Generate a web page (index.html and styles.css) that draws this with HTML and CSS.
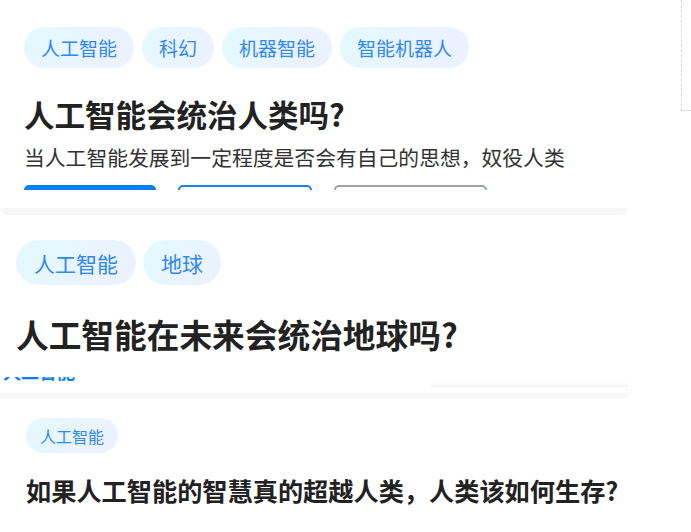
FILE: index.html
```html
<!DOCTYPE html>
<html lang="zh-CN">
  <head>
    <meta charset="UTF-8" />
    <meta name="viewport" content="width=device-width, initial-scale=1.0" />
    <title>话题卡片</title>
    <link rel="stylesheet" href="styles.css">
  </head>
  <body>
    <div class="page">
      <div class="feed">
        <div class="card card-first">
          <div class="card-clip">
            <div class="tags">
              <span class="tag">人工智能</span>
              <span class="tag">科幻</span>
              <span class="tag">机器智能</span>
              <span class="tag">智能机器人</span>
            </div>
            <h2 class="title">人工智能会统治人类吗?</h2>
            <p class="desc">当人工智能发展到一定程度是否会有自己的思想，奴役人类</p>
            <div class="actions">
              <button class="btn btn-primary" aria-label="参与讨论"></button>
              <button class="btn btn-outline" aria-label="查看详情"></button>
              <button class="btn btn-gray" aria-label="收藏话题"></button>
            </div>
          </div>
        </div>

        <div class="card card-second">
          <div class="tags">
            <span class="tag">人工智能</span>
            <span class="tag">地球</span>
          </div>
          <h2 class="title">人工智能在未来会统治地球吗?</h2>
          <div class="peek">
            <span class="peek-text">人工智能</span>
          </div>
          <div class="card-foot">
            <div class="foot-shade"></div>
          </div>
        </div>

        <div class="card card-third">
          <div class="tags">
            <span class="tag">人工智能</span>
          </div>
          <h2 class="title">如果人工智能的智慧真的超越人类，人类该如何生存?</h2>
        </div>
      </div>
      <div class="side-box"></div>
    </div>
  </body>
</html>
```

FILE: styles.css
```css
body {
  margin: 0;
  padding: 0;
  background-color: #fff;
  font-family: "Noto Sans CJK SC", "Noto Sans", sans-serif;
  overflow: hidden;
}

.page {
  display: flex;
  align-items: flex-start;
}

.feed {
  flex: 0 0 681px;
}

.side-box {
  flex: 1;
  height: 110px;
  border-left: 1px dashed #d6d6e2;
  border-bottom: 1px dashed #d6d6e2;
}

.card {
  width: 628px;
  background-color: #fff;
  box-sizing: border-box;
}

.tags {
  display: flex;
  gap: 8px;
}

.tag {
  display: inline-flex;
  align-items: center;
  border-radius: 999px;
  color: #3088f4;
  background: linear-gradient(120deg, #e3f9ff 0%, #e9f4ff 55%, #edf0ff 100%);
  white-space: nowrap;
}

.title {
  margin: 0;
  color: #222;
  font-weight: 700;
  white-space: nowrap;
}

/* first card */
.card-first {
  height: 215px;
  padding-top: 27px;
  border-bottom: 7px solid #f7f7f7;
  border-radius: 0 0 8px 8px;
}

.card-first .card-clip {
  height: 163px;
  overflow: hidden;
  padding-left: 24px;
}

.card-first .tag {
  height: 41px;
  padding: 0 17px;
  font-size: 19px;
}

.card-first .title {
  margin-top: 28px;
  font-size: 30.5px;
  line-height: 36px;
}

.desc {
  margin: 11px 0 0;
  font-size: 20.8px;
  line-height: 28px;
  color: #333;
  white-space: nowrap;
}

.actions {
  display: flex;
  margin-top: 14px;
}

.btn {
  height: 36px;
  border-radius: 5px;
  background: #fff;
  margin-right: 22px;
  padding: 0;
}

.btn-primary {
  width: 132px;
  background-color: #0a7ef6;
  border: 2px solid #0a7ef6;
}

.btn-outline {
  width: 134px;
  border: 2px solid #1a80f4;
}

.btn-gray {
  width: 153px;
  border: 2px solid #9ba1b2;
}

/* second card */
.card-second {
  padding: 25px 0 0 16px;
  border-radius: 8px 8px 0 0;
}

.card-second .tag {
  height: 45px;
  padding: 0 18px;
  font-size: 21px;
}

.card-second .tags {
  gap: 7px;
}

.card-second .title {
  margin-top: 29px;
  font-size: 32.7px;
  line-height: 40px;
}

.peek {
  height: 5px;
  overflow: hidden;
  margin-top: 23px;
  margin-left: -13px;
}

.peek-text {
  display: block;
  margin-top: -15px;
  font-size: 18px;
  line-height: 18px;
  font-weight: 700;
  color: #0a7ef6;
}

.card-foot {
  height: 11px;
  margin-left: -16px;
  border-bottom: 5px solid #f7f7f7;
}

.foot-shade {
  margin-left: 430px;
  height: 5px;
  border-radius: 6px 0 0 0;
  background: linear-gradient(180deg, #fff 0%, #f4f4f4 100%);
}

/* third card */
.card-third {
  padding: 20px 0 0 26px;
}

.card-third .tag {
  height: 35px;
  padding: 0 14px;
  font-size: 16px;
}

.card-third .title {
  margin-top: 21px;
  font-size: 25.2px;
  line-height: 32px;
}
```
